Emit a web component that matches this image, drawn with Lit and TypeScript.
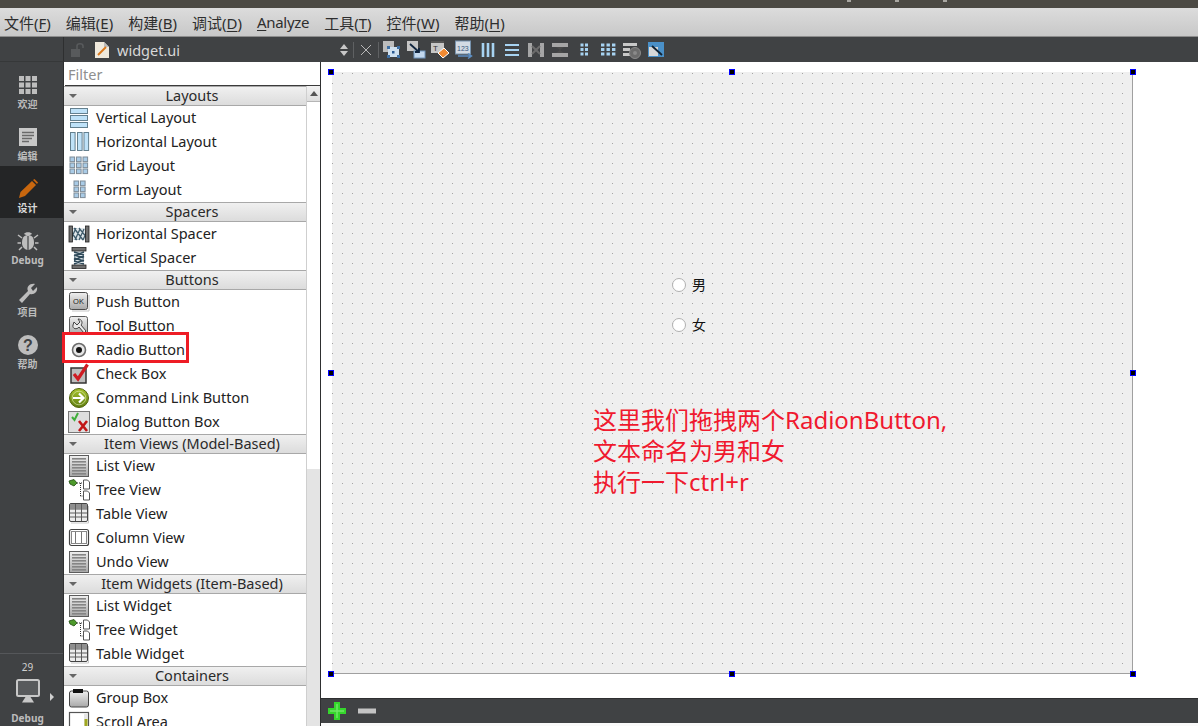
import { LitElement, html, css, svg } from 'lit';
import { customElement } from 'lit/decorators.js';

const box = (inner: unknown, size = 22) =>
  svg`<svg width=${size} height=${size} viewBox="0 0 22 22">${inner}</svg>`;

const listIcon = box(svg`
  <rect x="1.5" y="0.5" width="19" height="21" fill="url(#grayG)" stroke="#5c5c5c"/>
  ${[3, 6, 9, 12, 15, 18].map(y => svg`<rect x="4" y=${y} width="14" height="1.6" fill="#858585"/>`)}
`);

const treeIcon = box(svg`
  <path d="M1 2 L6 0.5 L9 4 L6 7 L2 5 Z" fill="#4e9a2c" stroke="#1f4a10" stroke-width=".8"/>
  <path d="M9 4 H15 M12.5 4 V17 M12.5 17 H15" stroke="#333" stroke-dasharray="1 1" fill="none"/>
  <path d="M15.5 1 H19.5 L21.5 3 V10 H15.5 Z M15.5 12 H19.5 L21.5 14 V21 H15.5 Z" fill="#fff" stroke="#555"/>
`);

const tableIcon = box(svg`
  <rect x="1.5" y="0.5" width="18" height="18" rx="1.5" fill="#ededed" stroke="#444"/>
  <rect x="2" y="1" width="17" height="4.5" fill="#8f8f8f"/>
  <path d="M2 6 H19 M2 10 H19 M2 14 H19 M7.5 1 V18 M13.5 1 V18" stroke="#5c5c5c" fill="none"/>
  <path d="M3 20 H20.5 V3" stroke="#c8c8c8" fill="none"/>
`);

const icons: Record<string, unknown> = {
  vlayout: box(svg`${[1, 8, 15].map(y => svg`<rect x="2.5" y=${y + .5} width="17" height="5" fill="#bfe2f8" stroke="#64808f"/>`)}`),
  hlayout: box(svg`${[2, 9, 15.5].map(x => svg`<rect x=${x + .5} y="1.5" width="4.6" height="18" fill="#bfe2f8" stroke="#64808f"/>`)}`),
  grid: box(svg`${[2, 8.5, 15].flatMap(x => [2, 8, 14].map(y => svg`<rect x=${x} y=${y} width="4.6" height="4.6" fill="#a9cbe6" stroke="#7f8d99"/>`))}`),
  form: box(svg`${[6, 12.5].flatMap(x => [2, 8, 14].map(y => svg`<rect x=${x} y=${y} width="4.6" height="4.6" fill="#a9cbe6" stroke="#7f8d99"/>`))}`),
  hspacer: box(svg`
    <rect x="3" y="5" width="16" height="12" fill="#dfe6ea"/>
    <path d="M3 16 L8 5 M7 17 L12 6 M11 17 L16 6 M15 17 L19 8 M3 9 L9 17 M6 5 L15 17 M11 5 L19 15" stroke="#3f5c6c" stroke-width="1.3"/>
    <rect x="1" y="3" width="3.5" height="16" fill="#6f6f6f" stroke="#222" stroke-width=".8"/>
    <rect x="17.5" y="3" width="3.5" height="16" fill="#6f6f6f" stroke="#222" stroke-width=".8"/>
  `),
  vspacer: box(svg`
    <rect x="6" y="3" width="10" height="16" fill="#dfe6ea"/>
    <path d="M6 5 L16 8 M6 8 L16 11 M6 11 L16 14 M6 14 L16 17 M16 5 L6 9 M16 9 L6 13 M16 13 L6 17" stroke="#2f4a5a" stroke-width="1.4"/>
    <rect x="4" y="0.5" width="14" height="3.5" fill="#6f6f6f" stroke="#222" stroke-width=".8"/>
    <rect x="4" y="18" width="14" height="3.5" fill="#6f6f6f" stroke="#222" stroke-width=".8"/>
  `),
  push: box(svg`
    <rect x="1.5" y="1.5" width="18" height="17" rx="2" fill="url(#grayG)" stroke="#4c4c4c"/>
    <text x="10.5" y="13" text-anchor="middle" font-family="Liberation Sans" font-size="7.5" fill="#222">OK</text>
    <path d="M4 20 H21 V4" stroke="#c4c4c4" fill="none"/>
  `),
  tool: box(svg`
    <rect x="1.5" y="1.5" width="18" height="18" rx="2" fill="url(#grayG)" stroke="#5c5c5c"/>
    <path d="M5 10 C4 14 9 15 11 12 L16 18 L18 16 L13 10 C15 8 14 4 10 4 L12 7 L9 10 L6 7 Z" fill="#e8e8e8" stroke="#444"/>
  `),
  radio: box(svg`
    <circle cx="11" cy="11" r="6.5" fill="#e6e6e6" stroke="#6c6c6c" stroke-width="1.6"/>
    <circle cx="11" cy="11" r="3" fill="#111"/>
  `),
  check: box(svg`
    <rect x="3" y="5" width="15" height="15" fill="#bdbdbd" stroke="#333" stroke-width="1.5"/>
    <path d="M6 11 L10 16 L19.5 1.5" stroke="#cf1b22" stroke-width="3.2" fill="none"/>
  `),
  command: box(svg`
    <circle cx="11" cy="11" r="9.5" fill="url(#greenG)" stroke="#53660e"/>
    <circle cx="11" cy="11" r="6.8" fill="none" stroke="#e2eeb8" stroke-width=".6"/>
    <path d="M5 11 H15 M11 6.5 L15.5 11 L11 15.5" stroke="#fff" stroke-width="2.2" fill="none"/>
  `),
  dialog: box(svg`
    <rect x="0.5" y="0.5" width="21" height="21" fill="#dedede" stroke="#777"/>
    <path d="M4 6 L6.5 9 L10 2" stroke="#3fae3a" stroke-width="2" fill="none"/>
    <path d="M11 10 L19 20 M19 10 L11 20" stroke="#c11616" stroke-width="2.6"/>
  `),
  list: listIcon,
  tree: treeIcon,
  table: tableIcon,
  column: box(svg`
    <rect x="1.5" y="2.5" width="19" height="16" rx="2" fill="#fff" stroke="#444" stroke-width="1.2"/>
    <path d="M7.5 5 V16 M13.5 5 V16" stroke="#777"/>
    <rect x="3.5" y="4.5" width="15" height="12" fill="none" stroke="#888"/>
  `),
  group: box(svg`
    <rect x="1.5" y="4" width="19" height="16" rx="2" fill="url(#grayG)" stroke="#444"/>
    <rect x="5" y="2" width="10" height="4" fill="#111"/>
  `),
  scroll: box(svg`
    <rect x="1.5" y="1.5" width="19" height="22" fill="#fff" stroke="#555" stroke-width="1.2"/>
    <rect x="16" y="3" width="4" height="20" fill="#e4e4e4"/>
    <rect x="16.5" y="8" width="3" height="13" fill="#a0a820"/>
  `),
};

const palette: { name: string; items: [string, string][] }[] = [
  { name: 'Layouts', items: [['Vertical Layout', 'vlayout'], ['Horizontal Layout', 'hlayout'], ['Grid Layout', 'grid'], ['Form Layout', 'form']] },
  { name: 'Spacers', items: [['Horizontal Spacer', 'hspacer'], ['Vertical Spacer', 'vspacer']] },
  { name: 'Buttons', items: [['Push Button', 'push'], ['Tool Button', 'tool'], ['Radio Button', 'radio'], ['Check Box', 'check'], ['Command Link Button', 'command'], ['Dialog Button Box', 'dialog']] },
  { name: 'Item Views (Model-Based)', items: [['List View', 'list'], ['Tree View', 'tree'], ['Table View', 'table'], ['Column View', 'column'], ['Undo View', 'list']] },
  { name: 'Item Widgets (Item-Based)', items: [['List Widget', 'list'], ['Tree Widget', 'tree'], ['Table Widget', 'table']] },
  { name: 'Containers', items: [['Group Box', 'group'], ['Scroll Area', 'scroll']] },
];

const menus: [string, string, string][] = [
  ['文件(', 'F', ')'], ['编辑(', 'E', ')'], ['构建(', 'B', ')'], ['调试(', 'D', ')'],
  ['', 'A', 'nalyze'], ['工具(', 'T', ')'], ['控件(', 'W', ')'], ['帮助(', 'H', ')'],
];

const modes: { label: string; active?: boolean; icon: unknown }[] = [
  {
    label: '欢迎',
    icon: box(svg`${[2, 8.5, 15].flatMap(x => [2, 8.5, 15].map(y => svg`<rect x=${x} y=${y} width="5" height="5" fill="#bdbdbd"/>`))}`),
  },
  {
    label: '编辑',
    icon: box(svg`
      <rect x="2" y="2" width="18" height="18" fill="#c8c8c8"/>
      <path d="M5 6.5 H17 M5 9.5 H17 M5 12.5 H15 M5 15.5 H12" stroke="#6a6a6a" stroke-width="1.6"/>
    `),
  },
  {
    label: '设计',
    active: true,
    icon: box(svg`
      <path d="M2 20 L3.5 14 L15 3 L19 7 L8 18 Z" fill="#c9670e"/>
      <path d="M16 2 L17.5 1 L21 4.5 L20 6 Z" fill="#c9670e"/>
    `),
  },
  {
    label: 'Debug',
    icon: box(svg`
      <path d="M11 5 C6 5 5 9 5 13 C5 17 8 20 11 20 C14 20 17 17 17 13 C17 9 16 5 11 5 Z" fill="#bdbdbd"/>
      <path d="M7 4 C8 1.5 14 1.5 15 4 L11 6 Z" fill="#bdbdbd"/>
      <path d="M11 6 V20 M5 8 L1 5 M17 8 L21 5 M4 13 H0.5 M18 13 H21.5 M5 17 L2 20 M17 17 L20 20" stroke="#bdbdbd" stroke-width="1.5"/>
      <path d="M11 6 V20" stroke="#404244" stroke-width="1.2"/>
    `),
  },
  {
    label: '项目',
    icon: box(svg`
      <path d="M2 18 L11 9 C9 5 13 1 18 2 L14 6 L16 9 L20 5 C21 10 17 13 13 12 L5 21 Z" fill="#bdbdbd"/>
    `),
  },
  {
    label: '帮助',
    icon: box(svg`
      <circle cx="11" cy="11" r="10" fill="#bdbdbd"/>
      <text x="11" y="17" text-anchor="middle" font-family="Liberation Sans" font-weight="700" font-size="16" fill="#404244">?</text>
    `),
  },
];

const tb = (inner: unknown) => svg`<svg width="20" height="20" viewBox="0 0 20 20">${inner}</svg>`;

const toolIcons = [
  tb(svg`
    <rect x="1" y="1" width="11" height="11" fill="#bcbcbc"/>
    <rect x="6" y="7" width="11" height="10" fill="#cfe0f0"/>
    <path d="M5 6 H8 V9 H5 Z M15 6 H18 V9 H15 Z M5 15 H8 V18 H5 Z M15 15 H18 V18 H15 Z" fill="#3e6fa4"/>
    <rect x="10" y="11" width="2.5" height="2.5" fill="#2a5a94"/>
  `),
  tb(svg`
    <rect x="1" y="1" width="11" height="10" fill="#c6c6c6"/>
    <rect x="8" y="11" width="11" height="7" fill="#c2d8ee" stroke="#6f95bd"/>
    <path d="M4 4 L13 12 M13 8 V12 H9" stroke="#10253f" stroke-width="1.8" fill="none"/>
  `),
  tb(svg`
    <rect x="1" y="1" width="13" height="12" fill="#c6c6c6"/>
    <rect x="1" y="1" width="13" height="2" fill="#555"/>
    <text x="3" y="11" font-family="Liberation Sans" font-size="8" fill="#333">T</text>
    <path d="M8 13 L14 8 L19 13 L13 18 Z" fill="#f28a32" stroke="#fff"/>
  `),
  tb(svg`
    <rect x="1.5" y="1" width="15" height="13" fill="#d3dbe4" stroke="#7792ad"/>
    <text x="3" y="10.5" font-family="Liberation Sans" font-size="7" fill="#3a5a80">123</text>
    <path d="M4 16 H17 M14 13.5 L17.5 16 L14 18.5" stroke="#5d8fc4" stroke-width="1.5" fill="none"/>
  `),
  tb(svg`<path d="M5 3 V17 M10 3 V17 M15 3 V17" stroke="#a7d3f2" stroke-width="2.6"/>`),
  tb(svg`<path d="M3 5 H17 M3 10 H17 M3 15 H17" stroke="#a7d3f2" stroke-width="2.2"/>`),
  tb(svg`
    <path d="M2 3 H6 V17 H2 Z M14 3 H18 V17 H14 Z" fill="#a6a6a6"/>
    <path d="M6 6 L10 10 L14 6 M6 14 L10 10 L14 14" stroke="#6c6c6c" stroke-width="2" fill="none"/>
  `),
  tb(svg`
    <path d="M2 3 H18 V7 H2 Z M2 13 H18 V17 H2 Z" fill="#a6a6a6"/>
    <path d="M6 7 L10 10 L14 7 H6 M6 13 L10 10 L14 13 H6" fill="#4a4a4a"/>
  `),
  tb(svg`${[6.5, 11].flatMap(x => [3.5, 8, 12.5].map(y => svg`<rect x=${x} y=${y} width="3" height="3" fill="#a7d3f2"/>`))}`),
  tb(svg`${[3, 8.5, 14].flatMap(x => [3.5, 8, 12.5].map(y => svg`<rect x=${x} y=${y} width="3.4" height="3" fill="#a7d3f2"/>`))}`),
  tb(svg`
    <path d="M1 3 H15 V6 H1 Z M1 8 H8 V11 H1 Z M1 13 H8 V16 H1 Z" fill="#c8c8c8"/>
    <circle cx="13" cy="13" r="5.5" fill="#6c6c6c" stroke="#8a8a8a"/>
    <circle cx="13" cy="13" r="2" fill="#8a8a8a"/>
  `),
  tb(svg`
    <rect x="2" y="2" width="16" height="15" fill="#4a90c8"/>
    <rect x="3" y="7" width="9" height="9" fill="#d8d8d8"/>
    <path d="M6 6 L16 15" stroke="#123" stroke-width="1.8"/>
  `),
];

@customElement('app-root')
export class AppRoot extends LitElement {
  static styles = css`
    :host {
      display: flex;
      flex-direction: column;
      width: 1198px;
      height: 726px;
      overflow: hidden;
      font-family: 'Noto Sans', 'Noto Sans CJK SC', sans-serif;
      background: #fff;
    }
    .titlebar {
      height: 8px;
      flex: none;
      display: flex;
      gap: 44px;
      padding-left: 847px;
      background: #4b4943;
    }
    .titlebar i {
      width: 4px;
      height: 2px;
      background: #a9a7a2;
    }
    .menubar {
      height: 29px;
      flex: none;
      display: flex;
      align-items: center;
      box-sizing: border-box;
      padding-left: 4px;
      gap: 15px;
      font-size: 15px;
      color: #2e2e2e;
      background: linear-gradient(#dcdcdc, #c8c8c8);
      border-bottom: 1px solid #8d8d8d;
    }
    .menubar u {
      text-underline-offset: 2px;
    }
    .menubar span:nth-child(5) {
      letter-spacing: -0.3px;
    }
    .body {
      flex: 1;
      min-height: 0;
      display: flex;
    }

    .sidebar {
      width: 64px;
      flex: none;
      display: flex;
      flex-direction: column;
      background: #404244;
      border-right: 1px solid #2e2f30;
      box-sizing: border-box;
    }
    .side-head {
      height: 25px;
      flex: none;
      border-bottom: 1px solid #363839;
      box-sizing: border-box;
    }
    .mode {
      height: 52px;
      flex: none;
      display: flex;
      flex-direction: column;
      align-items: center;
      justify-content: flex-end;
      padding: 0 8px 3px 0;
      box-sizing: border-box;
      font-size: 10px;
      line-height: 14px;
      font-weight: 700;
      color: #bcbcbc;
    }
    .mode.active {
      background: #242526;
      color: #d8d8d8;
    }
    .mode svg {
      margin-bottom: 1px;
    }
    .kit {
      margin-top: auto;
      height: 73px;
      border-top: 1px solid #55575a;
      box-sizing: border-box;
      display: flex;
      flex-direction: column;
      align-items: center;
      padding: 6px 8px 0 0;
      font-size: 10px;
      font-weight: 700;
      color: #bcbcbc;
      line-height: 14px;
    }
    .kit .count {
      font-weight: 400;
      color: #d0d0d0;
    }
    .kit .monitor {
      position: relative;
      height: 24px;
      margin: 5px 0 8px;
    }
    .kit .tri {
      position: absolute;
      left: 34px;
      top: 14px;
      width: 0;
      height: 0;
      border-left: 4px solid #d0d0d0;
      border-top: 4px solid transparent;
      border-bottom: 4px solid transparent;
    }

    .main {
      flex: 1;
      min-width: 0;
      display: flex;
      flex-direction: column;
    }
    .toolbar {
      height: 25px;
      flex: none;
      display: flex;
      align-items: center;
      background: #404244;
      color: #d8d8d8;
    }
    .doc {
      width: 256px;
      flex: none;
      display: flex;
      align-items: center;
      box-sizing: border-box;
      padding-left: 6px;
      font-size: 14.5px;
      gap: 8px;
    }
    .doc .name {
      margin-left: -1px;
    }
    .tools {
      display: flex;
      align-items: center;
      flex: 1;
      height: 100%;
    }
    .tools .sort {
      margin-left: 19px;
    }
    .tools .sep {
      width: 1px;
      height: 16px;
      background: #5f6163;
    }
    .tools .sep.first {
      margin-left: 4px;
    }
    .tools .sep.last {
      margin-right: 1px;
    }
    .tools .btn {
      width: 24px;
      height: 24px;
      display: flex;
      align-items: center;
      justify-content: center;
    }

    .content {
      flex: 1;
      min-height: 0;
      display: flex;
    }
    .panel {
      width: 256px;
      flex: none;
      display: flex;
      flex-direction: column;
      background: #fff;
    }
    .filter {
      height: 24px;
      flex: none;
      box-sizing: border-box;
      padding: 1px 0 0 3px;
      font-size: 14.5px;
      line-height: 22px;
      color: #8f8f8f;
      margin-left: 1px;
      border-bottom: 1px solid #3a3a3a;
    }
    .lists {
      flex: 1;
      min-height: 0;
      display: flex;
    }
    .list {
      flex: 1;
      min-width: 0;
      overflow: hidden;
    }
    .cat {
      height: 20px;
      box-sizing: border-box;
      display: flex;
      align-items: center;
      justify-content: center;
      position: relative;
      padding: 0 0 2px 14px;
      font-size: 14.5px;
      line-height: 16px;
      color: #2a2a2a;
      background: linear-gradient(#f0f0f0, #dcdcdc);
      border-top: 1px solid #a8a8a8;
      border-bottom: 1px solid #a8a8a8;
    }
    .cat::before {
      content: '';
      position: absolute;
      left: 5px;
      top: 7px;
      border-top: 4px solid #666;
      border-left: 4px solid transparent;
      border-right: 4px solid transparent;
    }
    .item {
      height: 24px;
      display: flex;
      align-items: center;
      padding-left: 4px;
      font-size: 14.5px;
      color: #222;
      white-space: nowrap;
    }
    .item span {
      margin-top: -2px;
    }
    .item svg {
      flex: none;
      margin-right: 6px;
    }
    .scroll {
      width: 14px;
      flex: none;
      display: flex;
      flex-direction: column;
      background: #e4e4e4;
      border-left: 1px solid #cfcfcf;
      box-sizing: border-box;
    }
    .scroll .up {
      height: 15px;
      flex: none;
      display: flex;
      align-items: center;
      justify-content: center;
      background: linear-gradient(#f2f2f2, #dedede);
      border-bottom: 1px solid #b5b5b5;
    }
    .scroll .up i {
      border-bottom: 5px solid #555;
      border-left: 4px solid transparent;
      border-right: 4px solid transparent;
    }
    .scroll .thumb {
      height: 367px;
      flex: none;
      background: #fff;
    }

    .canvas {
      flex: 1;
      min-width: 0;
      display: flex;
      flex-direction: column;
      border-left: 1px solid #2e2f30;
    }
    .stage {
      flex: 1;
      min-height: 0;
      position: relative;
      background: #fff;
    }
    .form {
      position: absolute;
      left: 11px;
      top: 10px;
      width: 801px;
      height: 602px;
      box-sizing: border-box;
      border-right: 1px solid #a0a0a0;
      border-bottom: 1px solid #a0a0a0;
      background-color: #efefef;
      background-image: conic-gradient(at 1px 1px, transparent 75%, #a4a4a4 0);
      background-size: 10px 10px;
      background-position: 0 1px;
    }
    .handle {
      position: absolute;
      width: 6px;
      height: 6px;
      box-sizing: border-box;
      background: #000;
      border: 1px solid #0000ff;
    }
    .rb {
      position: absolute;
      display: flex;
      align-items: center;
      gap: 6px;
      font-size: 14px;
      line-height: 16px;
      color: #111;
    }
    .rb i {
      width: 14px;
      height: 14px;
      box-sizing: border-box;
      border-radius: 50%;
      background: #fff;
      border: 1px solid #b0b0b0;
    }
    .note {
      position: absolute;
      left: 261px;
      top: 332px;
      font-size: 24px;
      line-height: 31px;
      color: #f0192e;
      white-space: nowrap;
    }
    .bottom {
      height: 25px;
      flex: none;
      display: flex;
      align-items: center;
      gap: 10px;
      padding-left: 6px;
      background: #404244;
      border-top: 1px solid #2e2f30;
      box-sizing: border-box;
    }
    .foot {
      height: 3px;
      flex: none;
      background: #fafafa;
    }
    .mark {
      position: absolute;
      left: 62px;
      top: 332px;
      width: 127px;
      height: 31px;
      box-sizing: border-box;
      border: 3px solid #ee1c25;
    }
  `;

  render() {
    const w = 802, h = 602;
    const hx = [0, w / 2, w], hy = [0, h / 2, h];
    return html`
      <svg width="0" height="0" style="position:absolute">
        <defs>
          <linearGradient id="grayG" x1="0" y1="0" x2="0" y2="1">
            <stop offset="0" stop-color="#efefef" /><stop offset="1" stop-color="#a8a8a8" />
          </linearGradient>
          <linearGradient id="greenG" x1="0" y1="0" x2="0" y2="1">
            <stop offset="0" stop-color="#a6c22c" /><stop offset="1" stop-color="#5f7d10" />
          </linearGradient>
        </defs>
      </svg>
      <div class="titlebar"><i></i><i></i><i></i></div>
      <div class="menubar">
        ${menus.map(([a, k, b]) => html`<span>${a}<u>${k}</u>${b}</span>`)}
      </div>
      <div class="body">
        <div class="sidebar">
          <div class="side-head"></div>
          ${modes.map(m => html`
            <div class="mode ${m.active ? 'active' : ''}">${m.icon}<span>${m.label}</span></div>
          `)}
          <div class="kit">
            <span class="count">29</span>
            <div class="monitor">
              <svg width="24" height="24" viewBox="0 0 24 24">
                <rect x="1" y="1" width="22" height="16" rx="1.5" fill="#585a5c" stroke="#c8c8c8" stroke-width="2"/>
                <path d="M9.5 18 H14.5 L18 23.5 H6 Z" fill="#c8c8c8"/>
              </svg>
              <span class="tri"></span>
            </div>
            <span>Debug</span>
          </div>
        </div>
        <div class="main">
          <div class="toolbar">
            <div class="doc">
              <svg width="16" height="18" viewBox="0 0 16 18">
                <rect x="1" y="8" width="9" height="8" fill="#585a5c"/>
                <path d="M7 8 V5 C7 2 13 2 13 5 V7" stroke="#585a5c" stroke-width="1.6" fill="none"/>
              </svg>
              <svg width="16" height="18" viewBox="0 0 16 18">
                <path d="M1 1 H10 L15 6 V17 H1 Z" fill="#efe9dc"/>
                <path d="M10 1 V6 H15" fill="#bbb"/>
                <path d="M4 14 L12 6" stroke="#d9781c" stroke-width="2"/>
              </svg>
              <span class="name">widget.ui</span>
            </div>
            <div class="tools">
              <svg class="sort" width="10" height="14" viewBox="0 0 10 14">
                <path d="M1 6 L5 1 L9 6 Z M1 8 L5 13 L9 8 Z" fill="#c8c8c8"/>
              </svg>
              <span class="sep first"></span>
              <div class="btn">
                <svg width="12" height="12" viewBox="0 0 12 12"><path d="M1 1 L11 11 M11 1 L1 11" stroke="#b8b8b8"/></svg>
              </div>
              <span class="sep last"></span>
              ${toolIcons.map(i => html`<div class="btn">${i}</div>`)}
            </div>
          </div>
          <div class="content">
            <div class="panel">
              <div class="filter">Filter</div>
              <div class="lists">
                <div class="list">
                  ${palette.map(c => html`
                    <div class="cat">${c.name}</div>
                    ${c.items.map(([label, icon]) => html`
                      <div class="item">${icons[icon]}<span>${label}</span></div>
                    `)}
                  `)}
                </div>
                <div class="scroll">
                  <div class="up"><i></i></div>
                  <div class="thumb"></div>
                </div>
              </div>
            </div>
            <div class="canvas">
              <div class="stage">
                <div class="form">
                  <div class="rb" style="left:340px;top:205px"><i></i>男</div>
                  <div class="rb" style="left:340px;top:245px"><i></i>女</div>
                  <div class="note">这里我们拖拽两个RadionButton,<br />文本命名为男和女<br />执行一下ctrl+r</div>
                </div>
                ${hx.flatMap(x => hy.map(y => (x === w / 2 && y === h / 2) ? null : html`
                  <div class="handle" style="left:${7 + x}px;top:${7 + y}px"></div>
                `))}
              </div>
              <div class="bottom">
                <svg width="20" height="20" viewBox="0 0 20 20">
                  <path d="M10 1 V19 M1 10 H19" stroke="#35d62c" stroke-width="6"/>
                  <path d="M10 3 V17 M3 10 H17" stroke="#6fe866" stroke-width="1.5"/>
                </svg>
                <svg width="20" height="20" viewBox="0 0 20 20">
                  <path d="M1 10 H19" stroke="#c4c4c4" stroke-width="5"/>
                </svg>
              </div>
              <div class="foot"></div>
            </div>
          </div>
        </div>
      </div>
      <div class="mark"></div>
    `;
  }
}
